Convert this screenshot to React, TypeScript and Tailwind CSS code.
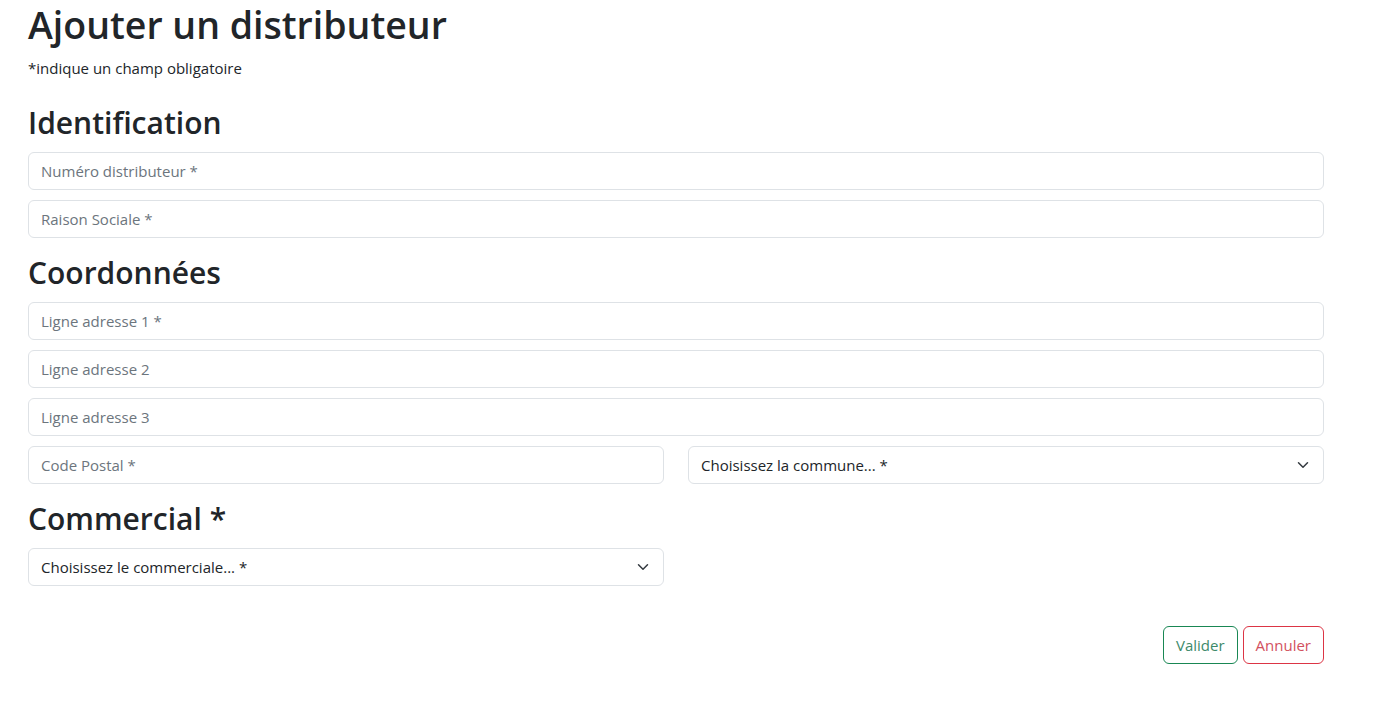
import React from 'react';

const font = { fontFamily: '"Open Sans", "Noto Sans", sans-serif' };

function TextInput({ placeholder }: { placeholder: string }) {
  return (
    <input
      type="text"
      placeholder={placeholder}
      className="block w-full h-[38px] px-[12px] rounded-[6px] border border-[#dee2e6] bg-white text-[15px] text-[#212529] placeholder:text-[#6c757d] outline-none"
    />
  );
}

function Chevron() {
  return (
    <svg width="16" height="12" viewBox="0 0 16 16" className="shrink-0">
      <path d="m2 5 6 6 6-6" fill="none" stroke="#343a40" strokeWidth="2" strokeLinecap="round" strokeLinejoin="round" />
    </svg>
  );
}

function SelectBox({ label }: { label: string }) {
  return (
    <div className="flex items-center justify-between w-full h-[38px] pl-[12px] pr-[12px] rounded-[6px] border border-[#dee2e6] bg-white text-[15px] text-[#212529]">
      <span>{label}</span>
      <Chevron />
    </div>
  );
}

function SectionTitle({ children }: { children: React.ReactNode }) {
  return <h2 className="text-[30px] leading-[38px] font-semibold text-[#212529] mb-[10px]">{children}</h2>;
}

export default function App() {
  return (
    <div className="min-h-screen bg-white text-[#212529] pt-[1px]" style={font}>
      <div className="w-[1296px] ml-[28px]">
        <h1 className="text-[37.5px] leading-[47px] font-semibold mb-[8px]">Ajouter un distributeur</h1>
        <p className="text-[15px] leading-[24px] mb-[24px]">*indique un champ obligatoire</p>

        <SectionTitle>Identification</SectionTitle>
        <div className="flex flex-col gap-[10px]">
          <TextInput placeholder="Numéro distributeur *" />
          <TextInput placeholder="Raison Sociale *" />
        </div>

        <div className="mt-[16px]">
          <SectionTitle>Coordonnées</SectionTitle>
        </div>
        <div className="flex flex-col gap-[10px]">
          <TextInput placeholder="Ligne adresse 1 *" />
          <TextInput placeholder="Ligne adresse 2" />
          <TextInput placeholder="Ligne adresse 3" />
          <div className="grid grid-cols-2 gap-[24px]">
            <TextInput placeholder="Code Postal *" />
            <SelectBox label="Choisissez la commune... *" />
          </div>
        </div>

        <div className="mt-[16px]">
          <SectionTitle>Commercial *</SectionTitle>
        </div>
        <div className="grid grid-cols-2 gap-[24px]">
          <SelectBox label="Choisissez le commerciale... *" />
        </div>

        <div className="flex justify-end gap-[5px] mt-[40px]">
          <button className="h-[38px] px-[12px] rounded-[6px] border border-[#198754] text-[15px] text-[#3d8a6a] bg-white">
            Valider
          </button>
          <button className="h-[38px] px-[12px] rounded-[6px] border border-[#dc3545] text-[15px] text-[#d2515e] bg-white">
            Annuler
          </button>
        </div>
      </div>
    </div>
  );
}
